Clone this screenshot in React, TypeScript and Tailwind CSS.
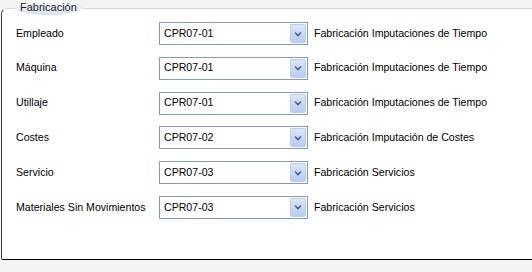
const ROWS = [
  { label: 'Empleado', code: 'CPR07-01', desc: 'Fabricación Imputaciones de Tiempo' },
  { label: 'Máquina', code: 'CPR07-01', desc: 'Fabricación Imputaciones de Tiempo' },
  { label: 'Utillaje', code: 'CPR07-01', desc: 'Fabricación Imputaciones de Tiempo' },
  { label: 'Costes', code: 'CPR07-02', desc: 'Fabricación Imputación de Costes' },
  { label: 'Servicio', code: 'CPR07-03', desc: 'Fabricación Servicios' },
  { label: 'Materiales Sin Movimientos', code: 'CPR07-03', desc: 'Fabricación Servicios' },
];

function ComboBox({ value }: { value: string }) {
  return (
    <div className="flex h-[23px] w-[149px] items-center border border-[#7f9db9] bg-white pl-[4px] pr-[1px]">
      <span className="flex-1">{value}</span>
      <div className="flex h-[19px] w-[16px] items-center justify-center rounded-[2px] border border-[#b9cdf4] bg-gradient-to-b from-[#dce6fc] to-[#b7cbf5]">
        <svg width="8" height="6" viewBox="0 0 8 6">
          <path d="M1 1.5 L4 4.5 L7 1.5" fill="none" stroke="#4d6185" strokeWidth="1.6" />
        </svg>
      </div>
    </div>
  );
}

export default function App() {
  return (
    <div className="h-[272px] w-[532px] overflow-hidden bg-[#f4f4f4] font-['Liberation_Sans',Arial,sans-serif] text-[10.6px] text-black">
      <div className="relative ml-[1px] mt-[8px] h-[252px] w-[560px] rounded-tl-[6px] rounded-bl-[2px] border-t border-l border-b border-t-[#d6d6d6] border-l-[#404040] border-b-black bg-white">
        {/* legend */}
        <div className="absolute left-[12px] top-[-9px] rounded-[50%] bg-gradient-to-b from-white via-[#e8eef8] to-[#d5e2f3] px-[6px] text-[11px] leading-[15px] text-[#1a1a1a]">
          Fabricación
        </div>

        <div className="flex flex-col gap-[11.8px] pt-[13px]">
          {ROWS.map((r) => (
            <div key={r.label} className="flex h-[23px] items-center">
              <span className="w-[157px] pl-[14px]">{r.label}</span>
              <ComboBox value={r.code} />
              <span className="pl-[6px]">{r.desc}</span>
            </div>
          ))}
        </div>
      </div>
    </div>
  );
}
